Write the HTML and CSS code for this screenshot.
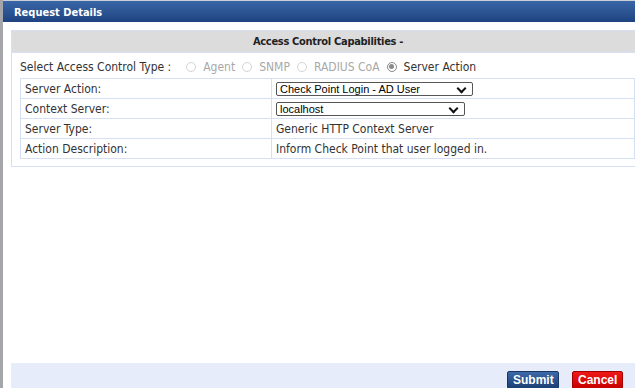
FILE: index.html
```html
<!DOCTYPE html>
<html lang="en">
<head>
  <meta charset="UTF-8" />
  <meta name="viewport" content="width=device-width, initial-scale=1" />
  <title>Request Details</title>
  <link rel="stylesheet" href="styles.css">
</head>
<body>

<div class="dialog">
  <div class="dialog-title">Request Details</div>

  <div class="dialog-body">
    <!-- Access control panel -->
    <div class="panel">
      <div class="panel-header">Access Control Capabilities -</div>

      <div class="type-row">
        <span class="type-label">Select Access Control Type :</span>
        <label class="radio disabled"><span class="dot"></span>Agent</label>
        <label class="radio disabled"><span class="dot"></span>SNMP</label>
        <label class="radio disabled"><span class="dot"></span>RADIUS CoA</label>
        <label class="radio checked"><span class="dot"></span>Server Action</label>
      </div>

      <table class="details">
        <tr>
          <td class="name">Server Action:</td>
          <td>
            <div class="select wide">Check Point Login - AD User<span class="chev"></span></div>
          </td>
        </tr>
        <tr>
          <td class="name">Context Server:</td>
          <td>
            <div class="select">localhost<span class="chev"></span></div>
          </td>
        </tr>
        <tr>
          <td class="name">Server Type:</td>
          <td>Generic HTTP Context Server</td>
        </tr>
        <tr>
          <td class="name">Action Description:</td>
          <td>Inform Check Point that user logged in.</td>
        </tr>
      </table>
    </div>

    <div class="dialog-footer">
      <button class="btn submit">Submit</button>
      <button class="btn cancel">Cancel</button>
    </div>
  </div>
</div>

</body>
</html>
```

FILE: styles.css
```css
html, body {
  margin: 0;
  padding: 0;
  height: 100%;
  overflow: hidden;
}

body {
  background: #a4a6aa;
  font-family: "DejaVu Sans Condensed", "DejaVu Sans", sans-serif;
  font-size: 12px;
  color: #333;
}

.dialog {
  margin-left: 3px;
  width: 648px;
  height: 396px;
  background: #fff;
  display: flex;
  flex-direction: column;
}

.dialog-title {
  height: 22px;
  line-height: 23px;
  padding-left: 11px;
  background: linear-gradient(#3a66a6, #1f4381);
  border-top: 1px solid #c9ced8;
  box-sizing: border-box;
  color: #fff;
  font-weight: bold;
  font-size: 11px;
}

.dialog-body {
  flex: 1;
  display: flex;
  flex-direction: column;
  padding: 8px 0 3px 8px;
}

.panel {
  border: 1px solid #d6e0f5;
  padding-bottom: 7px;
}

.panel-header {
  height: 21px;
  line-height: 21px;
  background: #dcdcdc;
  border-bottom: 1px solid #d6e0f5;
  text-align: center;
  font-weight: bold;
  font-size: 11px;
  letter-spacing: -0.3px;
  color: #222;
  padding-right: 6px;
}

.type-row {
  display: flex;
  align-items: center;
  height: 25px;
  padding: 2px 0 0 8px;
  box-sizing: border-box;
}

.type-label {
  margin-right: 15px;
}

.radio {
  display: flex;
  align-items: center;
  margin-right: 7px;
}

.radio .dot {
  width: 10px;
  height: 10px;
  border: 1px solid #d4d4d4;
  border-radius: 50%;
  margin-right: 7px;
  box-sizing: border-box;
  position: relative;
}

.radio.disabled {
  color: #a8a8a8;
}

.radio.checked .dot {
  border-color: #8a8a8a;
}

.radio.checked .dot::after {
  content: "";
  position: absolute;
  left: 1.5px;
  top: 1.5px;
  width: 5px;
  height: 5px;
  border-radius: 50%;
  background: #8a8a8a;
}

.details {
  margin: 0 8px;
  border-collapse: collapse;
  width: 615px;
}

.details td {
  border: 1px solid #d6e0f5;
  height: 20px;
  padding: 0 4px;
  box-sizing: border-box;
}

.details td.name {
  width: 251px;
}

.select {
  position: relative;
  width: 197px;
  height: 14px;
  line-height: 13px;
  border: 1px solid #555;
  border-radius: 2px;
  box-sizing: border-box;
  padding-left: 3px;
  font-family: "Liberation Sans", Arial, sans-serif;
  font-size: 11px;
  color: #000;
}

.select.wide {
  width: 197px;
}

.select:not(.wide) {
  width: 189px;
}

.chev {
  position: absolute;
  right: 7px;
  top: 2px;
  width: 5px;
  height: 5px;
  border-right: 2px solid #111;
  border-bottom: 2px solid #111;
  transform: rotate(45deg);
}

.dialog-footer {
  margin-top: auto;
  height: 30px;
  background: #e6ecfa;
  display: flex;
  justify-content: flex-end;
  align-items: flex-start;
  padding: 8px 28px 0 0;
  box-sizing: border-box;
  gap: 13px;
}

.btn {
  height: 18px;
  padding: 0 5px;
  font-family: "Liberation Sans", Arial, sans-serif;
  font-weight: bold;
  font-size: 12px;
  color: #fff;
  border-radius: 2px;
  cursor: pointer;
}

.btn.submit {
  width: 52px;
  background: linear-gradient(#3c6aa8, #1c3e74);
  border: 1px solid #1a3563;
}

.btn.cancel {
  width: 51px;
  background: linear-gradient(#f01818, #c80000);
  border: 1px solid #a00000;
}
```
